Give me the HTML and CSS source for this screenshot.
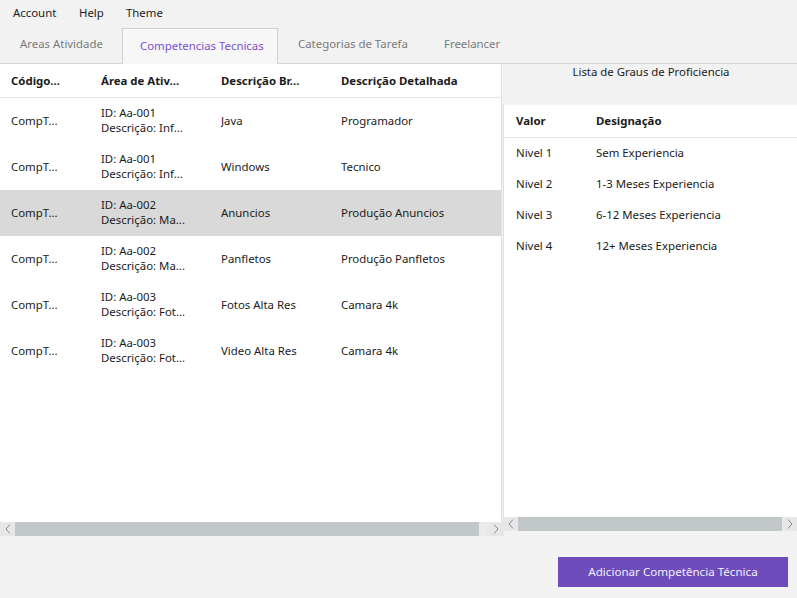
FILE: index.html
```html
<!DOCTYPE html>
<html>
<head>
<meta charset="utf-8">
<link rel="stylesheet" href="styles.css">
</head>
<body>
<div class="app">
  <div class="menubar">
    <span class="menu-item">Account</span>
    <span class="menu-item">Help</span>
    <span class="menu-item">Theme</span>
  </div>
  <div class="tabs">
    <div class="tab t1">Areas Atividade</div>
    <div class="tab t2 active">Competencias Tecnicas</div>
    <div class="tab t3">Categorias de Tarefa</div>
    <div class="tab t4">Freelancer</div>
  </div>
  <div class="main">
    <div class="left">
      <div class="grid">
        <div class="row head">
          <div class="c c1">Código...</div>
          <div class="c c2">Área de Ativ...</div>
          <div class="c c3">Descrição Br...</div>
          <div class="c c4">Descrição Detalhada</div>
        </div>
        <div class="row">
          <div class="c c1">CompT...</div>
          <div class="c c2"><div class="ln">ID: Aa-001</div><div class="ln">Descrição: Inf...</div></div>
          <div class="c c3">Java</div>
          <div class="c c4">Programador</div>
        </div>
        <div class="row">
          <div class="c c1">CompT...</div>
          <div class="c c2"><div class="ln">ID: Aa-001</div><div class="ln">Descrição: Inf...</div></div>
          <div class="c c3">Windows</div>
          <div class="c c4">Tecnico</div>
        </div>
        <div class="row selected">
          <div class="c c1">CompT...</div>
          <div class="c c2"><div class="ln">ID: Aa-002</div><div class="ln">Descrição: Ma...</div></div>
          <div class="c c3">Anuncios</div>
          <div class="c c4">Produção Anuncios</div>
        </div>
        <div class="row">
          <div class="c c1">CompT...</div>
          <div class="c c2"><div class="ln">ID: Aa-002</div><div class="ln">Descrição: Ma...</div></div>
          <div class="c c3">Panfletos</div>
          <div class="c c4">Produção Panfletos</div>
        </div>
        <div class="row">
          <div class="c c1">CompT...</div>
          <div class="c c2"><div class="ln">ID: Aa-003</div><div class="ln">Descrição: Fot...</div></div>
          <div class="c c3">Fotos Alta Res</div>
          <div class="c c4">Camara 4k</div>
        </div>
        <div class="row">
          <div class="c c1">CompT...</div>
          <div class="c c2"><div class="ln">ID: Aa-003</div><div class="ln">Descrição: Fot...</div></div>
          <div class="c c3">Video Alta Res</div>
          <div class="c c4">Camara 4k</div>
        </div>
      </div>
      <div class="hscroll left-scroll">
        <div class="sbtn"><svg width="6" height="10" viewBox="0 0 6 10"><polyline points="5,0.5 1,5 5,9.5" fill="none" stroke="#8a8a8a" stroke-width="1"/></svg></div>
        <div class="thumb"></div>
        <div class="track"></div>
        <div class="sbtn"><svg width="6" height="10" viewBox="0 0 6 10"><polyline points="1,0.5 5,5 1,9.5" fill="none" stroke="#8a8a8a" stroke-width="1"/></svg></div>
      </div>
    </div>
    <div class="right">
      <div class="title">Lista de Graus de Proficiencia</div>
      <div class="rgrid">
        <div class="rrow head">
          <div class="rc rc1">Valor</div>
          <div class="rc">Designação</div>
        </div>
        <div class="rrow">
          <div class="rc rc1">Nivel 1</div>
          <div class="rc">Sem Experiencia</div>
        </div>
        <div class="rrow">
          <div class="rc rc1">Nivel 2</div>
          <div class="rc">1-3 Meses Experiencia</div>
        </div>
        <div class="rrow">
          <div class="rc rc1">Nivel 3</div>
          <div class="rc">6-12 Meses Experiencia</div>
        </div>
        <div class="rrow">
          <div class="rc rc1">Nivel 4</div>
          <div class="rc">12+ Meses Experiencia</div>
        </div>
      </div>
      <div class="hscroll right-scroll">
        <div class="sbtn"><svg width="6" height="10" viewBox="0 0 6 10"><polyline points="5,0.5 1,5 5,9.5" fill="none" stroke="#8a8a8a" stroke-width="1"/></svg></div>
        <div class="thumb"></div>
        <div class="sbtn"><svg width="6" height="10" viewBox="0 0 6 10"><polyline points="1,0.5 5,5 1,9.5" fill="none" stroke="#8a8a8a" stroke-width="1"/></svg></div>
      </div>
    </div>
  </div>
  <div class="footer">
    <button class="primary">Adicionar Competência Técnica</button>
  </div>
</div>
</body>
</html>
```
FILE: styles.css
```css
* { box-sizing: border-box; }
html, body { margin: 0; padding: 0; }
body {
  width: 797px;
  height: 598px;
  overflow: hidden;
  background: #f2f2f2;
  font-family: "Noto Sans", "Open Sans", sans-serif;
  font-size: 11.4px;
  color: #1b1b1b;
}
.app { display: flex; flex-direction: column; height: 598px; }

.menubar {
  height: 25px;
  display: flex;
  align-items: center;
  padding-left: 13px;
}
.menu-item { line-height: 25px; }
.menu-item:nth-child(1) { width: 66px; }
.menu-item:nth-child(2) { width: 47px; }

.tabs {
  height: 39px;
  display: flex;
  align-items: flex-end;
  border-bottom: 1px solid #d6d6d6;
}
.tab {
  height: 35px;
  display: flex;
  align-items: center;
  color: #7a7a7a;
  padding-bottom: 4px;
}
.t1 { width: 122px; padding-left: 20px; }
.t2 { width: 156px; padding-left: 17px; }
.t3 { width: 145px; padding-left: 20px; }
.t4 { padding-left: 21px; }
.tab.active {
  color: #7a4fcf;
  background: #f7f7f7;
  border: 1px solid #d0d0d0;
  border-bottom: none;
  height: 36px;
  margin-bottom: -1px;
  padding-bottom: 3px;
}

.main {
  display: flex;
  height: 473px;
}
.left {
  width: 503px;
  display: flex;
  flex-direction: column;
}
.grid {
  background: #fff;
  height: 458px;
  width: 502px;
  border-right: 1px solid #e0e0e0;
}
.row {
  display: flex;
  height: 46px;
  align-items: center;
  padding-bottom: 2px;
}
.row.head {
  height: 34px;
  font-weight: bold;
  border-bottom: 1px solid #e6e6e6;
  padding-bottom: 1px;
}
.row.selected { background: #d9d9d9; }
.c { white-space: nowrap; overflow: hidden; }
.ln { line-height: 15.5px; }
.c1 { width: 101px; padding-left: 11px; }
.c2 { width: 120px; }
.c3 { width: 120px; }
.c4 { flex: 1; }

.hscroll {
  display: flex;
  height: 14px;
}
.left-scroll { width: 504px; }
.sbtn {
  width: 15px;
  height: 14px;
  background: #e7e7e7;
  display: flex;
  align-items: center;
  justify-content: center;
}
.left-scroll .sbtn:last-child { width: 17px; }
.thumb { flex: 1; background: #c2c7c9; }
.track { width: 8px; background: #ebebeb; }

.right {
  flex: 1;
  display: flex;
  flex-direction: column;
}
.title {
  height: 41px;
  text-align: center;
  line-height: 16px;
  padding-left: 2px;
}
.rgrid {
  background: #fff;
  height: 412px;
  border-left: 1px solid #e0e0e0;
}
.rrow {
  display: flex;
  height: 31px;
  align-items: center;
  padding-bottom: 2px;
}
.rrow.head {
  height: 33px;
  font-weight: bold;
  border-bottom: 1px solid #e6e6e6;
  padding-bottom: 1px;
}
.rc1 { width: 92px; padding-left: 12px; }

.footer {
  flex: 1;
  display: flex;
  justify-content: flex-end;
  align-items: flex-start;
  padding-top: 20px;
  padding-right: 9px;
}
.primary {
  width: 230px;
  height: 30px;
  background: #6f4cbb;
  color: #f2effa;
  border: none;
  font-family: "Noto Sans", "Open Sans", sans-serif;
  font-size: 11.6px;
  padding: 0 0 2px 0;
}
```
